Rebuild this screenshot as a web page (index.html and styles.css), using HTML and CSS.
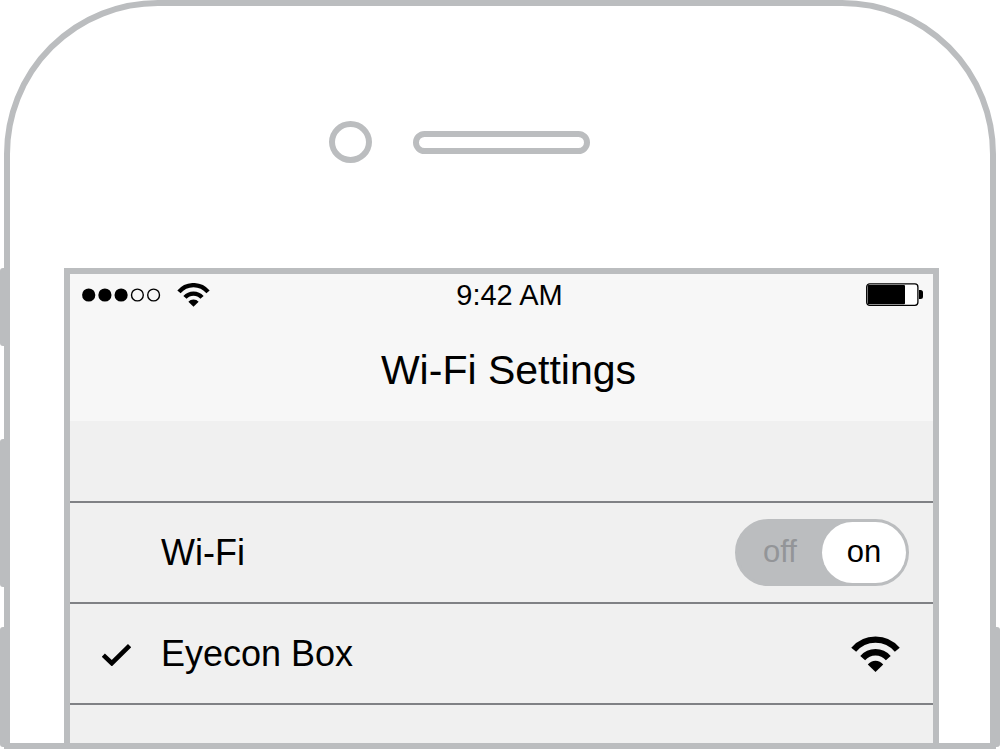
FILE: index.html
```html
<!DOCTYPE html>
<html lang="en">
<head>
    <meta charset="UTF-8">
    <meta name="viewport" content="width=device-width, initial-scale=1.0">
    <title>Wi-Fi Settings</title>
    <link rel="stylesheet" href="styles.css">
</head>
<body>

    <div class="device">
        <span class="side-btn mute"></span>
        <span class="side-btn volume-up"></span>
        <span class="side-btn volume-down"></span>
        <span class="side-btn power"></span>

        <div class="earpiece">
            <span class="camera"></span>
            <span class="speaker"></span>
        </div>

        <div class="screen">
            <header>
                <div class="status-bar">
                    <div class="signal">
                        <svg width="79" height="14" viewBox="0 0 79 14">
                            <circle cx="6.7" cy="7" r="6.6"/>
                            <circle cx="22.9" cy="7" r="6.6"/>
                            <circle cx="39.1" cy="7" r="6.6"/>
                            <g fill="none" stroke="#000" stroke-width="1.4">
                                <circle cx="55.4" cy="7" r="5.9"/>
                                <circle cx="71.6" cy="7" r="5.9"/>
                            </g>
                        </svg>
                        <svg width="33" height="24" viewBox="0 0 49 36">
                            <g fill="none" stroke="#000" stroke-width="6.4">
                                <path d="M2.7 13.3A28.5 28.5 0 0 1 46.3 13.3"/>
                                <path d="M11.7 21.7A17 17 0 0 1 37.3 21.7"/>
                            </g>
                            <path d="M16.8 28.2A10 10 0 0 1 32.2 28.2L24.5 35.6Z"/>
                        </svg>
                    </div>
                    <time>9:42 AM</time>
                    <svg class="battery" width="57" height="24" viewBox="0 0 57 24">
                        <rect x="0.7" y="0.9" width="51.2" height="21.4" rx="3" fill="#fff" stroke="#000" stroke-width="1.3"/>
                        <rect x="1.7" y="1.9" width="37.3" height="19.4" rx="1"/>
                        <path d="M53 7h1.5a2.5 2.5 0 0 1 2.5 2.5v4a2.5 2.5 0 0 1-2.5 2.5H53Z"/>
                    </svg>
                </div>
                <h1>Wi-Fi Settings</h1>
            </header>

            <ul class="settings">
                <li>
                    <span class="mark"></span>
                    <label class="name" for="wifi">Wi-Fi</label>
                    <div class="toggle">
                        <input type="checkbox" id="wifi" checked>
                        <span class="off">off</span>
                        <span class="on">on</span>
                    </div>
                </li>
                <li class="network">
                    <svg class="mark" viewBox="0 0 29 24">
                        <path d="M1.3 13.1L9.8 21.2L27.6 3.6" fill="none" stroke="#000" stroke-width="4.6"/>
                    </svg>
                    <span class="name">Eyecon Box</span>
                    <svg width="49" height="36" viewBox="0 0 49 36">
                        <g fill="none" stroke="#000" stroke-width="6.4">
                            <path d="M2.7 13.8A28.5 28.5 0 0 1 46.3 13.8"/>
                            <path d="M11.7 22.1A17 17 0 0 1 37.3 22.1"/>
                        </g>
                        <path d="M16.8 28.4A10 10 0 0 1 32.2 28.4L24.5 35.9Z"/>
                    </svg>
                </li>
            </ul>
        </div>
    </div>

</body>
</html>
```
FILE: styles.css
```css
* {
    box-sizing: border-box;
}

body {
    margin: 0;
    padding: 0 4px;
    background: white;
    color: black;
    font-family: "Liberation Sans", Arial, sans-serif;
}

svg {
    display: block;
    flex-shrink: 0;
}

.device {
    position: relative;
    padding: 115px 51px 0 54px;
    border: 6px solid #bbbdbf;
    border-radius: 154px 154px 0 0;
}

/* buttons on the edges of the phone */
.side-btn {
    position: absolute;
    left: -10px;
    width: 5px;
    background: #bbbdbf;
    border-radius: 3px 0 0 3px;
}

.mute { top: 262px; height: 78px; }
.volume-up { top: 433px; height: 148px; }
.volume-down { top: 621px; height: 120px; }

.power {
    top: 621px;
    left: auto;
    right: -10px;
    height: 120px;
    border-radius: 0 3px 3px 0;
}

.earpiece {
    display: flex;
    justify-content: center;
    align-items: center;
    gap: 41px;
    padding-right: 84px;
    margin-bottom: 105px;
}

.camera {
    width: 43px;
    height: 42px;
    border: 6px solid #bbbdbf;
    border-radius: 50%;
}

.speaker {
    width: 177px;
    height: 23px;
    border: 6px solid #bbbdbf;
    border-radius: 12px;
}

.screen {
    border: 6px solid #bbbdbf;
    border-bottom: none;
    background: #f0f0f0;
}

header {
    height: 147px;
    background: #f7f7f7;
}

.status-bar {
    display: grid;
    grid-template-columns: 1fr auto 1fr;
    align-items: center;
    height: 42px;
    padding: 0 10px 0 12px;
}

.signal {
    display: flex;
    align-items: center;
    gap: 16px;
}

time {
    padding-left: 14px;
    font-size: 29px;
    line-height: 32px;
}

.battery {
    justify-self: end;
}

h1 {
    margin: 30px 0 0;
    padding-left: 14px;
    font-size: 41px;
    font-weight: normal;
    line-height: 48px;
    text-align: center;
}

.settings {
    list-style: none;
    margin: 0;
    padding: 80px 0 38px;
}

.settings li {
    display: flex;
    align-items: center;
    height: 101px;
    padding: 0 24px 0 32px;
    border-top: 2px solid #808185;
}

.settings li:last-child {
    height: 103px;
    border-bottom: 2px solid #808185;
}

.settings .network {
    padding-right: 33px;
}

.mark {
    width: 29px;
    height: 24px;
    margin-right: 30px;
}

.name {
    flex: 1;
    font-size: 36px;
    line-height: 40px;
}

.toggle {
    position: relative;
    display: flex;
    height: 67px;
    border: 3px solid #bbbdbf;
    border-radius: 34px;
    background: #bbbdbf;
    font-size: 31px;
    line-height: 59px;
    text-align: center;
}

.toggle span {
    width: 84px;
    border-radius: 31px;
}

.toggle input {
    position: absolute;
    inset: 0;
    margin: 0;
    appearance: none;
    cursor: pointer;
}

.off {
    color: #939598;
}

.on {
    background: white;
}
```
